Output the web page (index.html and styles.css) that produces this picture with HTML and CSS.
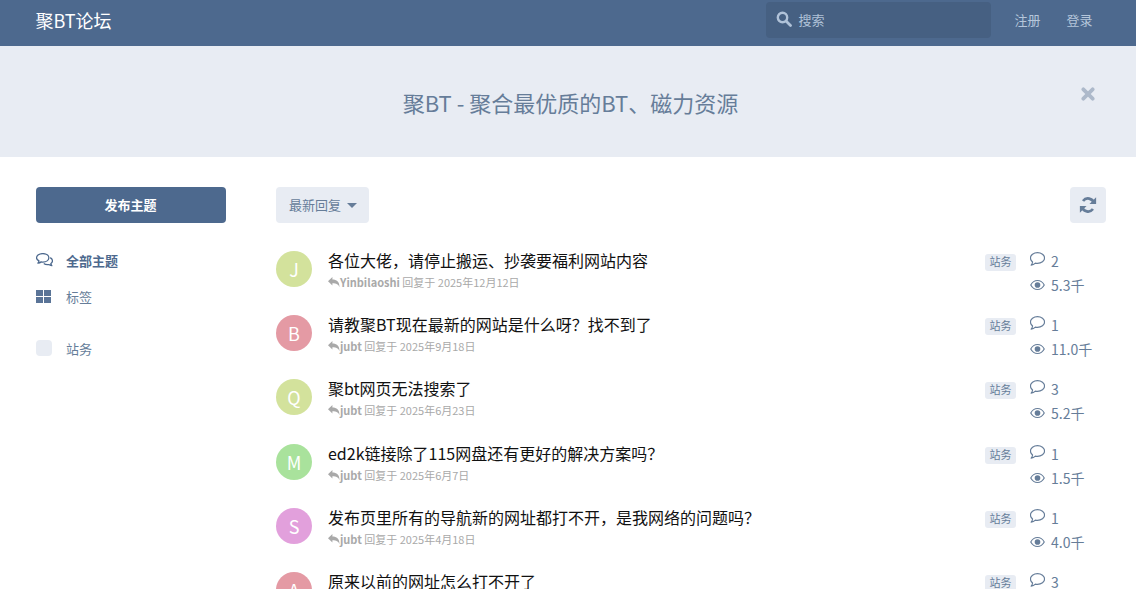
FILE: index.html
```html
<!DOCTYPE html>
<html lang="zh-CN">
<head>
    <meta charset="UTF-8">
    <meta name="viewport" content="width=device-width, initial-scale=1.0">
    <title>聚BT论坛</title>
    <link rel="stylesheet" href="styles.css">
</head>
<body>
    <svg class="defs" width="0" height="0" aria-hidden="true">
        <symbol id="i-comment" viewBox="1 1 14 14">
            <path d="M8 1.600c3.600 0 6.600 2.200 6.600 5s-3 5-6.600 5c-.7 0-1.400-.1-2-.2-.9.8-2.200 1.600-3.900 1.800.7-.8 1.200-1.700 1.300-2.900C2.400 9.400 1.400 8.100 1.400 6.600c0-2.800 3-5 6.600-5z" fill="none" stroke="currentColor" stroke-width="1.100" stroke-linejoin="round"/>
        </symbol>
        <symbol id="i-eye" viewBox="0 0 16 12">
            <path d="M.8 6C2.400 3 5 1.200 8 1.200S13.600 3 15.200 6C13.600 9 11 10.800 8 10.800S2.400 9 .8 6z" fill="none" stroke="currentColor" stroke-width="1.200"/>
            <circle cx="8" cy="6" r="3" fill="currentColor"/>
        </symbol>
        <symbol id="i-reply" viewBox="0 0 12 11">
            <path d="M0 4.200 4.400 0v2.400c4.200 0 7.100 1.900 7.100 7.800-1.100-3-3-4-7.100-4v2.300z" fill="currentColor"/>
        </symbol>
    </svg>

    <div class="page">
        <header class="topbar">
            <a class="brand">聚BT论坛</a>
            <div class="topbar-right">
                <div class="search">
                    <svg class="search-icon" viewBox="0 0 16 16"><circle cx="6.500" cy="6.500" r="4.700" fill="none" stroke="currentColor" stroke-width="2.400"/><path d="M10 10l4.500 4.500" stroke="currentColor" stroke-width="2.800" stroke-linecap="round"/></svg>
                    <span>搜索</span>
                </div>
                <a class="top-link">注册</a>
                <a class="top-link">登录</a>
            </div>
        </header>

        <section class="hero">
            <h1>聚BT - 聚合最优质的BT、磁力资源</h1>
            <svg class="hero-close" viewBox="0 0 12 12"><path d="M2 2l8 8M10 2l-8 8" stroke="currentColor" stroke-width="3.200" stroke-linecap="round"/></svg>
        </section>

        <div class="main">
            <aside class="sidebar">
                <button class="btn-primary">发布主题</button>
                <nav class="side-nav">
                    <a class="side-item active">
                        <svg class="side-icon" viewBox="0.500 0.500 16 14"><path d="M7 1c3.200 0 5.600 1.800 5.600 4s-2.400 4-5.600 4c-.6 0-1.100-.1-1.600-.2-.8.600-1.800 1-3.100 1.200.5-.6.900-1.300 1-2.100C1.800 7.100 1 6.100 1 5c0-2.200 2.600-4 6-4z" fill="none" stroke="currentColor" stroke-width="1.200" stroke-linejoin="round"/><path d="M13.900 4.800c1.300.7 2.100 1.800 2.100 3 0 1-.6 2-1.500 2.600.1.800.4 1.500.9 2-1.200-.2-2.100-.6-2.800-1.100-.4.100-.9.100-1.300.1-1.400 0-2.600-.4-3.500-1.100" fill="none" stroke="currentColor" stroke-width="1.200" stroke-linejoin="round"/></svg>
                        <span>全部主题</span>
                    </a>
                    <a class="side-item">
                        <span class="side-icon grid-icon"><i></i><i></i><i></i><i></i></span>
                        <span>标签</span>
                    </a>
                    <a class="side-item tag-item">
                        <span class="side-icon tag-swatch"></span>
                        <span>站务</span>
                    </a>
                </nav>
            </aside>

            <main class="content">
                <div class="toolbar">
                    <button class="btn-sort">最新回复<span class="caret"></span></button>
                    <button class="btn-refresh" aria-label="刷新">
                        <svg viewBox="0 0 16 16"><path d="M13.300 6.300A5.500 5.500 0 0 0 3.600 4.400" fill="none" stroke="currentColor" stroke-width="2.400"/><path d="M15.200 1.200v5.900H9.300z" fill="currentColor"/><path d="M2.700 9.700a5.500 5.500 0 0 0 9.700 1.900" fill="none" stroke="currentColor" stroke-width="2.400"/><path d="M.8 14.800V8.900h5.900z" fill="currentColor"/></svg>
                    </button>
                </div>

                <ul class="topics">
                    <li class="topic">
                        <span class="avatar av-lime">J</span>
                        <div class="topic-main">
                            <h3>各位大佬，请停止搬运、抄袭要福利网站内容</h3>
                            <p class="meta"><svg class="reply"><use href="#i-reply"/></svg><b>Yinbilaoshi</b> 回复于 2025年12月12日</p>
                        </div>
                        <span class="tag">站务</span>
                        <div class="stats">
                            <span><svg class="ico-comment"><use href="#i-comment"/></svg>2</span>
                            <span><svg class="ico-eye"><use href="#i-eye"/></svg>5.3千</span>
                        </div>
                    </li>
                    <li class="topic">
                        <span class="avatar av-pink">B</span>
                        <div class="topic-main">
                            <h3>请教聚BT现在最新的网站是什么呀？找不到了</h3>
                            <p class="meta"><svg class="reply"><use href="#i-reply"/></svg><b>jubt</b> 回复于 2025年9月18日</p>
                        </div>
                        <span class="tag">站务</span>
                        <div class="stats">
                            <span><svg class="ico-comment"><use href="#i-comment"/></svg>1</span>
                            <span><svg class="ico-eye"><use href="#i-eye"/></svg>11.0千</span>
                        </div>
                    </li>
                    <li class="topic">
                        <span class="avatar av-lime">Q</span>
                        <div class="topic-main">
                            <h3>聚bt网页无法搜索了</h3>
                            <p class="meta"><svg class="reply"><use href="#i-reply"/></svg><b>jubt</b> 回复于 2025年6月23日</p>
                        </div>
                        <span class="tag">站务</span>
                        <div class="stats">
                            <span><svg class="ico-comment"><use href="#i-comment"/></svg>3</span>
                            <span><svg class="ico-eye"><use href="#i-eye"/></svg>5.2千</span>
                        </div>
                    </li>
                    <li class="topic">
                        <span class="avatar av-green">M</span>
                        <div class="topic-main">
                            <h3>ed2k链接除了115网盘还有更好的解决方案吗？</h3>
                            <p class="meta"><svg class="reply"><use href="#i-reply"/></svg><b>jubt</b> 回复于 2025年6月7日</p>
                        </div>
                        <span class="tag">站务</span>
                        <div class="stats">
                            <span><svg class="ico-comment"><use href="#i-comment"/></svg>1</span>
                            <span><svg class="ico-eye"><use href="#i-eye"/></svg>1.5千</span>
                        </div>
                    </li>
                    <li class="topic">
                        <span class="avatar av-purple">S</span>
                        <div class="topic-main">
                            <h3>发布页里所有的导航新的网址都打不开，是我网络的问题吗？</h3>
                            <p class="meta"><svg class="reply"><use href="#i-reply"/></svg><b>jubt</b> 回复于 2025年4月18日</p>
                        </div>
                        <span class="tag">站务</span>
                        <div class="stats">
                            <span><svg class="ico-comment"><use href="#i-comment"/></svg>1</span>
                            <span><svg class="ico-eye"><use href="#i-eye"/></svg>4.0千</span>
                        </div>
                    </li>
                    <li class="topic">
                        <span class="avatar av-pink">A</span>
                        <div class="topic-main">
                            <h3>原来以前的网址怎么打不开了</h3>
                        </div>
                        <span class="tag">站务</span>
                        <div class="stats">
                            <span><svg class="ico-comment"><use href="#i-comment"/></svg>3</span>
                        </div>
                    </li>
                </ul>
            </main>
        </div>
    </div>
</body>
</html>
```

FILE: styles.css
```css
* {
    box-sizing: border-box;
}
html, body {
    margin: 0;
    height: 100%;
    overflow: hidden;
}
body {
    font-family: "Noto Sans CJK SC", "Noto Sans", sans-serif;
    font-size: 13px;
    color: #667d99;
    background: #fff;
}
.defs {
    position: absolute;
}
.page {
    height: 589px;
    overflow: hidden;
}

/* top bar */
.topbar {
    height: 46px;
    background: #4d698e;
    display: flex;
    align-items: center;
    justify-content: space-between;
    padding: 0 30.500px 6px 35.500px;
}
.brand {
    font-size: 18px;
    color: #fff;
    line-height: 24px;
}
.topbar-right {
    display: flex;
    align-items: center;
    margin-top: -1px;
}
.search {
    width: 225px;
    height: 36px;
    margin: 0 10px 0 0;
    padding-left: 10px;
    display: flex;
    align-items: center;
    gap: 6px;
    background: #466082;
    border-radius: 4px;
    color: #b0c2d8;
}
.search-icon {
    width: 16px;
    height: 16px;
    margin-top: -2px;
}
.top-link {
    padding: 0 13px;
    color: #b5c6db;
}

/* welcome hero */
.hero {
    position: relative;
    height: 111px;
    padding-left: 5px;
    background: #e8ecf3;
    display: flex;
    align-items: center;
    justify-content: center;
}
.hero h1 {
    margin: 0;
    font-size: 22px;
    font-weight: 400;
    color: #667d99;
}
.hero-close {
    position: absolute;
    right: 41px;
    top: 41px;
    width: 14px;
    height: 14px;
    color: #adb9ca;
}

/* layout */
.main {
    display: flex;
    padding: 30px 30px 0 36px;
}
.sidebar {
    width: 190px;
    margin-right: 50px;
    flex-shrink: 0;
}
.btn-primary {
    width: 100%;
    height: 36px;
    padding: 0 1px 2px 0;
    border: none;
    border-radius: 4px;
    background: #4d698e;
    color: #fff;
    font: inherit;
    font-weight: 700;
}
.side-nav {
    margin-top: 19px;
}
.side-item {
    display: flex;
    align-items: center;
    height: 36px;
    color: #667d99;
}
.side-item.active {
    color: #4d698e;
    font-weight: 700;
}
.side-icon {
    width: 17px;
    height: 15px;
    margin-right: 13px;
    flex-shrink: 0;
}
.grid-icon {
    display: grid;
    grid-template-columns: 7px 7px;
    grid-template-rows: 6px 6px;
    gap: 1px;
    align-content: center;
    width: 16px;
    margin-right: 14px;
}
.grid-icon i {
    background: #5a7497;
}
.tag-item {
    margin-top: 16px;
}
.tag-swatch {
    width: 16px;
    height: 16px;
    margin-right: 14px;
    border-radius: 4px;
    background: #e8ecf3;
}

/* list */
.content {
    flex: 1;
    min-width: 0;
}
.toolbar {
    display: flex;
    justify-content: space-between;
    margin-bottom: 28px;
}
.btn-sort {
    height: 36px;
    padding: 0 12px 2px 13px;
    border: none;
    border-radius: 4px;
    background: #e8ecf3;
    color: #667d99;
    font: inherit;
    display: flex;
    align-items: center;
}
.caret {
    width: 0;
    height: 0;
    margin: 2px 0 0 6px;
    border-left: 5px solid transparent;
    border-right: 5px solid transparent;
    border-top: 5px solid #667d99;
}
.btn-refresh {
    width: 36px;
    height: 36px;
    padding: 0;
    border: none;
    border-radius: 4px;
    background: #e8ecf3;
    color: #667d99;
    display: flex;
    align-items: center;
    justify-content: center;
}
.btn-refresh svg {
    width: 18px;
    height: 18px;
}
.topics {
    list-style: none;
    margin: 0;
    padding: 0;
}
.topic {
    display: flex;
    height: 64.2px;
}
.avatar {
    width: 36px;
    height: 36px;
    border-radius: 50%;
    margin-right: 16px;
    flex-shrink: 0;
    display: flex;
    align-items: center;
    justify-content: center;
    font-size: 18px;
    color: #fff;
}
.av-lime { background: #d3e29c; }
.av-pink { background: #e49aa4; }
.av-green { background: #a9e29c; }
.av-purple { background: #e2a0dc; }
.topic-main {
    flex: 1;
    min-width: 0;
}
.topic-main h3 {
    margin: -1px 0 0;
    font-size: 16px;
    font-weight: 400;
    line-height: 20px;
    color: #111;
}
.meta {
    margin: 4px 0 0;
    font-size: 11px;
    line-height: 17px;
    color: #a9a9a9;
    display: flex;
    align-items: center;
    white-space: pre;
}
.meta b {
    font-size: 11px;
}
.reply {
    width: 12px;
    height: 11px;
    color: #a9a9a9;
}
.tag {
    align-self: flex-start;
    margin-top: 3px;
    width: 31px;
    height: 17px;
    margin-right: 14px;
    background: #e8ecf3;
    border-radius: 3px;
    font-size: 11px;
    line-height: 15px;
    text-align: center;
    color: #667d99;
}
.stats {
    width: 76px;
    flex-shrink: 0;
    margin-right: 0;
    font-size: 14px;
    line-height: 24px;
    color: #667d99;
    display: flex;
    flex-direction: column;
    margin-top: -2px;
}
.stats span {
    display: flex;
    align-items: center;
    white-space: nowrap;
}
.stats svg {
    flex-shrink: 0;
    margin-right: 6px;
}
.ico-comment {
    width: 15px;
    height: 15px;
    margin-top: -3px;
}
.ico-eye {
    width: 15px;
    height: 12px;
}
```
